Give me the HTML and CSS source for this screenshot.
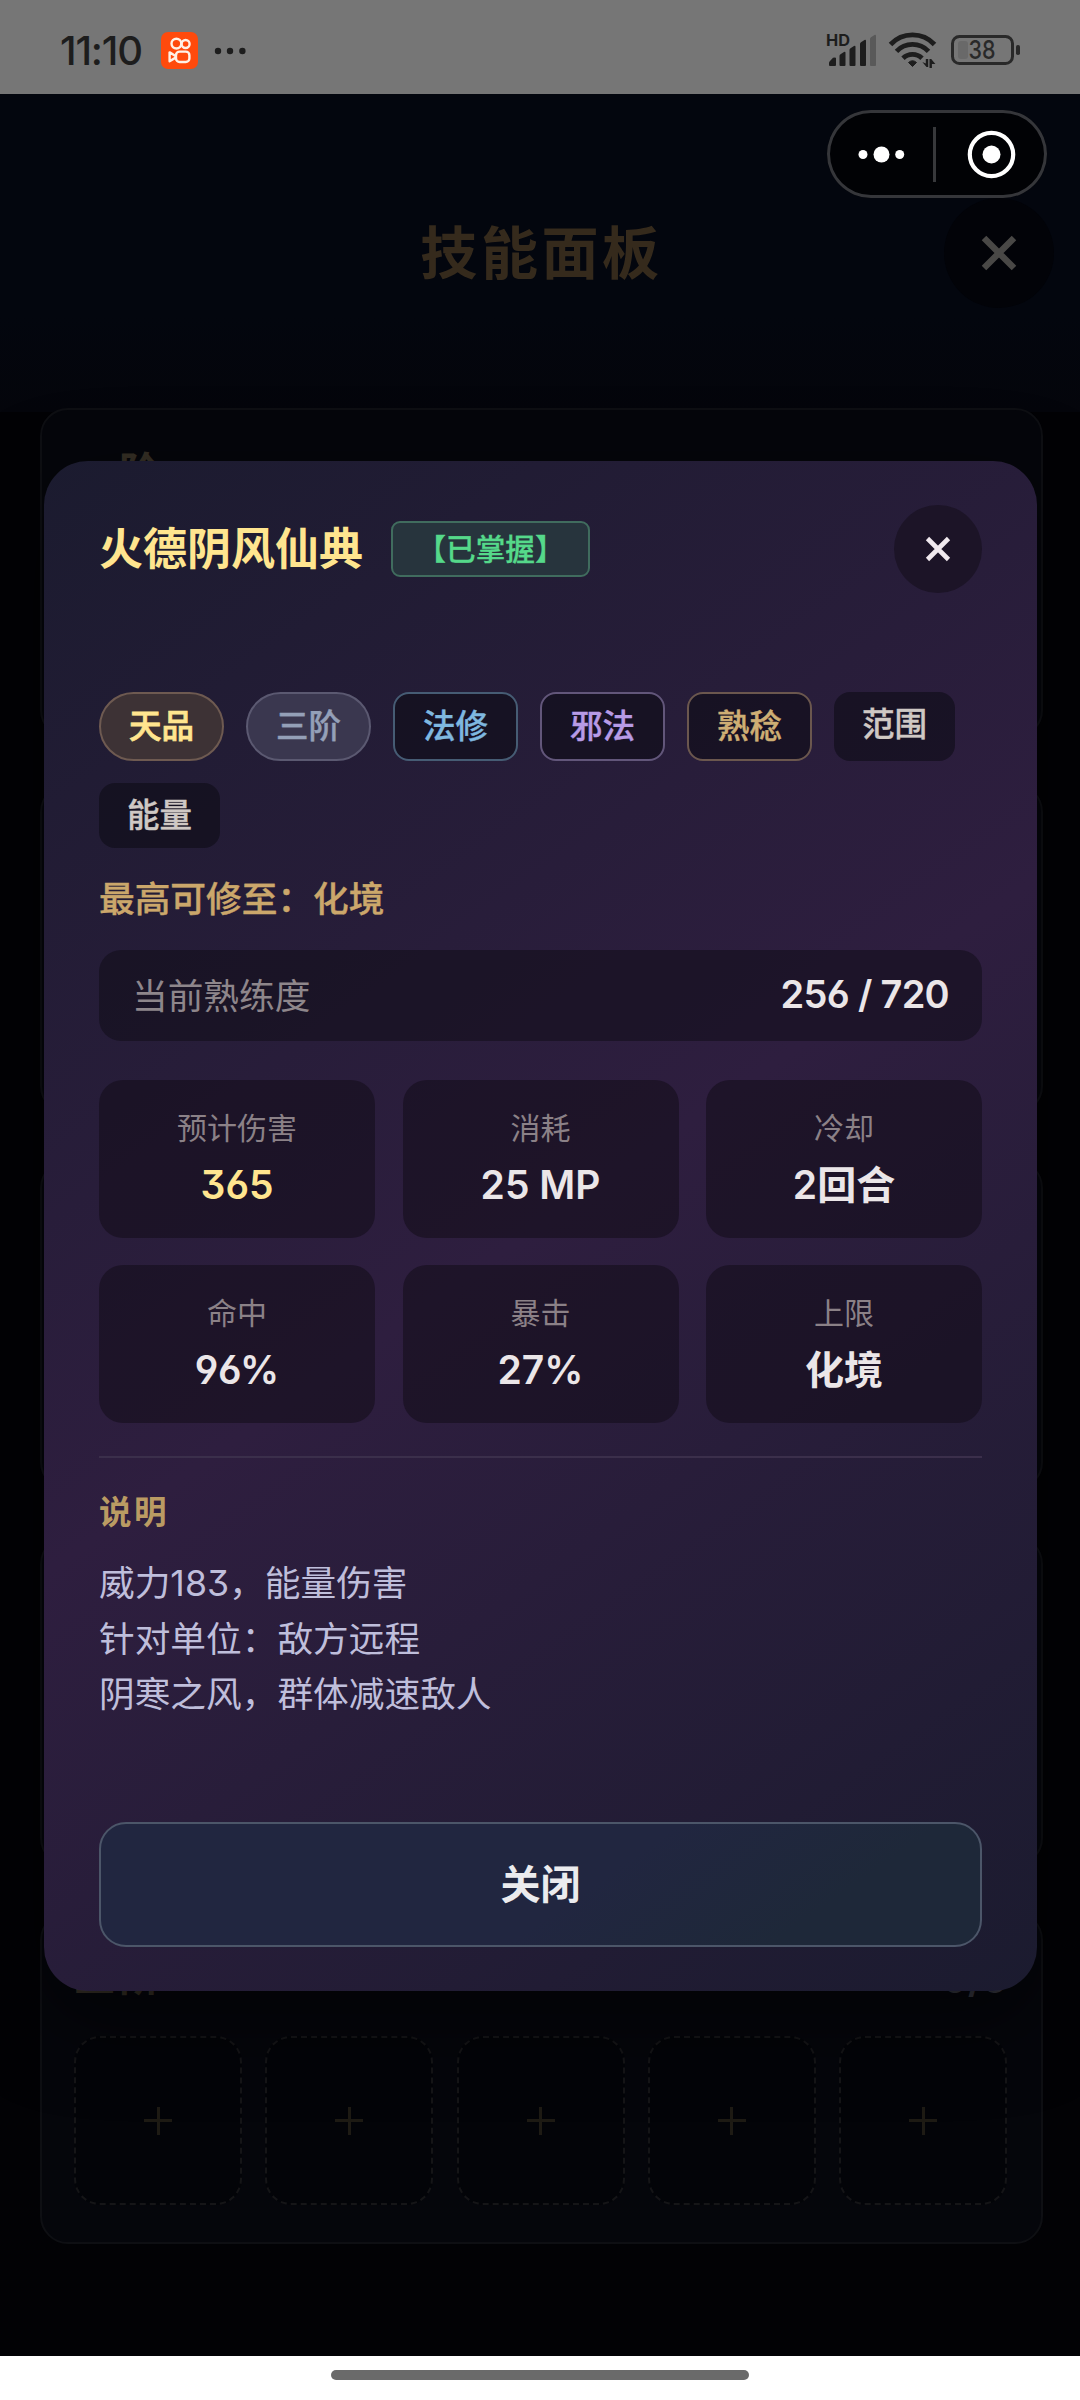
FILE: index.html
```html
<!DOCTYPE html>
<html lang="zh-CN">
<head>
<meta charset="utf-8">
<title>技能面板</title>
<link rel="stylesheet" href="styles.css">
</head>
<body>
<div class="screen">
  <header class="status">
    <div class="status-left">
      <span class="clock">11:10</span>
      <svg class="app-icon" width="37" height="37" viewBox="0 0 37 37">
        <rect width="37" height="37" rx="7" fill="#ff4a0c"/>
        <g fill="none" stroke="#fff1e6" stroke-width="2.4">
          <circle cx="15.4" cy="11.6" r="4.9"/>
          <circle cx="24.6" cy="12" r="4"/>
          <rect x="15" y="19.6" width="13.4" height="10.4" rx="3.6"/>
          <path d="M8.6 20.4v8.8l6-3.6v-1.6z" stroke-linejoin="round"/>
        </g>
      </svg>
      <svg class="more" width="32" height="8" viewBox="0 0 32 8" fill="#1d1d1d">
        <circle cx="4" cy="4" r="3.2"/><circle cx="16" cy="4" r="3.2"/><circle cx="28.4" cy="4" r="3.2"/>
      </svg>
    </div>
    <svg class="status-icons" width="195" height="40" viewBox="0 0 195 40">
      <text class="hd" x="1" y="16.5" textLength="24" lengthAdjust="spacingAndGlyphs">HD</text>
      <g fill="#1d1d1d">
        <path d="M4 36v-2q0-1 1-2l3-3.200q3-1 3 .5v6.700q0 1-1 1h-5q-1 0-1-1z"/>
        <path d="M14.500 27q0-1 1-1.700l3.500-2.300q1.500-.6 1.500 1v12q0 1-1 1h-4q-1 0-1-1z"/>
        <path d="M24.500 21q0-1 1-1.700l3.500-2.300q1.500-.6 1.500 1v18q0 1-1 1h-4q-1 0-1-1z"/>
        <path d="M35 15q0-1 1-1.700l3.500-2.300q1.500-.6 1.500 1v24q0 1-1 1h-4q-1 0-1-1z"/>
        <path d="M45 10q0-1 1-1.700l3.500-2.300q1.500-.6 1.500 1v29q0 1-1 1h-4q-1 0-1-1z" fill="#595959"/>
      </g>
      <g fill="none" stroke="#1d1d1d" stroke-width="4.800">
        <path d="M65.500 15.500a30 30 0 0 1 44 0"/>
        <path d="M71.500 22.300a22 22 0 0 1 32 0"/>
        <path d="M78 29.200a13.500 13.500 0 0 1 19 0"/>
      </g>
      <path d="M83.500 33.500q4-3.500 8 0l-4 4z" fill="#1d1d1d" stroke="#1d1d1d" stroke-linejoin="round"/>
      <path d="M97.300 33l4.200 5h1.700v-8h-2.400v4.500zM104.500 39v-9h1.700l4.200 5h-3.500v4z" fill="#1d1d1d"/>
      <rect x="133" y="12" width="10" height="18" rx="3" fill="#696969"/>
      <rect x="127.500" y="7.500" width="60" height="27" rx="7" fill="none" stroke="#292929" stroke-width="3"/>
      <rect x="191" y="16" width="4" height="10" rx="1.800" fill="#292929"/>
      <text class="battery" x="143.500" y="30" textLength="27" lengthAdjust="spacingAndGlyphs">38</text>
    </svg>
  </header>

  <main class="app">
    <div class="hero">
      <h1 class="page-title">技能面板</h1>
      <div class="page-close">
        <svg width="36" height="36" viewBox="0 0 36 36" stroke="#494846" stroke-width="6.400"><path d="M3 3l30 30M33 3L3 33"/></svg>
      </div>
    </div>
    <div class="tiers">
      <section class="tier"><div class="tier-head"><span>一阶</span></div></section>
      <section class="tier"></section>
      <section class="tier"></section>
      <section class="tier"></section>
      <section class="tier">
        <div class="tier-head"><span>五阶</span><span class="tier-count">0/5</span></div>
        <div class="slots">
          <div class="slot"></div><div class="slot"></div><div class="slot"></div><div class="slot"></div><div class="slot"></div>
        </div>
      </section>
    </div>

    <div class="overlay">
      <div class="modal">
        <div class="modal-head">
          <h2 class="skill-name">火德阴风仙典</h2>
          <span class="mastered">【已掌握】</span>
          <div class="modal-close">
            <svg width="26" height="26" viewBox="0 0 26 26" stroke="#f0e9ee" stroke-width="4.600"><path d="M2.500 2.500l21 21M23.500 2.500l-21 21"/></svg>
          </div>
        </div>
        <div class="tags">
          <span class="tag tag-grade">天品</span>
          <span class="tag tag-tier">三阶</span>
          <span class="tag tag-school">法修</span>
          <span class="tag tag-evil">邪法</span>
          <span class="tag tag-skill">熟稔</span>
          <span class="tag">范围</span>
          <span class="tag">能量</span>
        </div>
        <p class="cap">最高可修至：化境</p>
        <div class="progress"><span>当前熟练度</span><b class="num">256 / 720</b></div>
        <div class="stats">
          <div class="stat"><span>预计伤害</span><b class="gold">365</b></div>
          <div class="stat"><span>消耗</span><b>25 MP</b></div>
          <div class="stat"><span>冷却</span><b>2回合</b></div>
          <div class="stat"><span>命中</span><b>96%</b></div>
          <div class="stat"><span>暴击</span><b>27%</b></div>
          <div class="stat"><span>上限</span><b>化境</b></div>
        </div>
        <div class="notes">
          <h3>说明</h3>
          <p>威力183，能量伤害</p>
          <p>针对单位：敌方远程</p>
          <p>阴寒之风，群体减速敌人</p>
        </div>
        <button class="close-btn">关闭</button>
      </div>
    </div>

    <div class="capsule">
      <svg width="220" height="88" viewBox="0 0 220 88">
        <g fill="#fff">
          <circle cx="36" cy="44.500" r="4.500"/><circle cx="54.500" cy="44.500" r="8"/><circle cx="72.700" cy="44.500" r="4.500"/>
          <circle cx="164.500" cy="44.500" r="9"/>
        </g>
        <rect x="106" y="17" width="3" height="55" fill="#37383b"/>
        <circle cx="164.500" cy="44.500" r="21.700" fill="none" stroke="#fff" stroke-width="4.200"/>
      </svg>
    </div>
  </main>

  <footer class="navbar"><span class="pill"></span></footer>
</div>
</body>
</html>
```
FILE: styles.css
```css
* { box-sizing: border-box; }

body {
  margin: 0;
  font-family: Inter, "Noto Sans CJK SC", sans-serif;
  font-feature-settings: "cv03", "cv04", "cv09";
}

h1, h2, h3, p { margin: 0; }

.screen {
  width: 1080px;
  height: 2400px;
  display: flex;
  flex-direction: column;
  overflow: hidden;
}

/* status bar */
.status {
  height: 94px;
  flex: none;
  background: #767676;
  display: flex;
  justify-content: space-between;
  padding: 0 60px 0 60px;
}
.status-left {
  display: flex;
  align-items: center;
  padding-top: 7px;
}
.clock {
  width: 101px;
  font-size: 40px;
  font-weight: 500;
  line-height: 40px;
  letter-spacing: -1.200px;
  color: #1d1d1d;
}
.more { margin-left: 16px; }
.status-icons { margin-top: 29px; }
.hd { font: 700 16px Inter, sans-serif; fill: #1d1d1d; }
.battery { font: 500 26px Inter, sans-serif; fill: #292929; }

/* page behind the dialog */
.app {
  position: relative;
  flex: 1;
  background: #020205;
}
.hero {
  height: 318px;
  padding: 104px 26px 0;
  display: grid;
  grid-template-columns: 110px 1fr 110px;
  align-items: start;
  background: linear-gradient(#03060e 70%, #04050b);
}
.page-title {
  grid-column: 2;
  padding: 1px 0 0 3px;
  text-align: center;
  font-size: 57px;
  line-height: 110px;
  letter-spacing: 3.600px;
  color: #352a1c;
}
.page-close {
  width: 110px;
  height: 110px;
  border-radius: 50%;
  background: #020308;
  display: flex;
  align-items: center;
  justify-content: center;
}
.tiers {
  margin-top: -4px;
  padding: 0 37px 0 40px;
  display: flex;
  flex-direction: column;
  gap: 46px;
}
.tier {
  height: 330px;
  border: 2px solid #0e0f13;
  border-radius: 28px;
  background: #05060b;
  padding: 36px 34px 0 32px;
}
.tier:last-child { height: 332px; }
.tier-head {
  display: flex;
  justify-content: space-between;
  height: 50px;
  line-height: 52px;
  font-size: 41px;
  font-weight: 700;
  letter-spacing: 4px;
  color: #352f25;
}
.tier-count {
  padding-top: 4px;
  font-size: 36px;
  letter-spacing: 1px;
  color: #33343c;
}
.slots {
  margin-top: 36px;
  display: grid;
  grid-template-columns: repeat(5, 168px);
  justify-content: space-between;
}
.slot {
  height: 169px;
  border: 2px dashed #151517;
  border-radius: 26px;
  background:
    linear-gradient(#1e1b14, #1e1b14) center / 28px 3px no-repeat,
    linear-gradient(#1e1b14, #1e1b14) center / 3px 28px no-repeat,
    #030408;
}

/* mini-program capsule */
.capsule {
  position: absolute;
  top: 16px;
  right: 33px;
  width: 220px;
  height: 88px;
  border-radius: 44px;
  background: #010205;
  box-shadow: inset 0 0 0 3px #35363a;
}
.capsule svg { display: block; }

/* dialog */
.overlay {
  position: absolute;
  inset: 0;
  display: flex;
  align-items: center;
  padding: 2px 43px 0 44px;
}
.modal {
  width: 100%;
  height: 1530px;
  border-radius: 44px;
  padding: 44px 55px;
  background: linear-gradient(145deg, #1b1b2f 0%, #2e1e3f 50%, #1b1b2f 100%);
  box-shadow: 0 28px 86px rgba(0, 0, 0, 0.5);
  display: flex;
  flex-direction: column;
}
.modal-head {
  display: flex;
  align-items: center;
  height: 88px;
}
.skill-name {
  font-size: 44px;
  line-height: 60px;
  color: #ffe58f;
}
.mastered {
  margin-left: 28px;
  width: 199px;
  height: 56px;
  border: 2px solid #406c5e;
  border-radius: 9px;
  background: #27343d;
  color: #55d98a;
  font-size: 29.600px;
  font-weight: 500;
  line-height: 53px;
  text-align: center;
  -webkit-text-stroke: 0.3px;
}
.modal-close {
  margin-left: auto;
  width: 88px;
  height: 88px;
  border-radius: 50%;
  background: #1c1427;
  display: flex;
  align-items: center;
  justify-content: center;
}
.tags {
  margin-top: 99px;
  display: flex;
  flex-wrap: wrap;
  gap: 22px;
}
.tag {
  padding: 0 28px;
  border-radius: 16px;
  background: rgba(14, 11, 22, 0.6);
  color: #cfc8c4;
  font-size: 32.500px;
  font-weight: 500;
  line-height: 65px;
  -webkit-text-stroke: 0.4px;
}
.tag-grade, .tag-tier, .tag-school, .tag-evil, .tag-skill { border: 2px solid; }
.tag-grade {
  border-color: #6e5a51;
  border-radius: 35px;
  background: #3d3235;
  color: #ffe58f;
  -webkit-text-stroke: 0.8px;
}
.tag-tier {
  border-color: #5b5971;
  border-radius: 35px;
  background: #3a374f;
  color: #94a0b8;
}
.tag-school { border-color: #465c74; color: #7fb8e0; }
.tag-evil { border-color: #62567a; color: #b79be6; }
.tag-skill { border-color: #6b574e; color: #ceae74; }
.cap {
  margin-top: 26px;
  font-size: 35.700px;
  font-weight: 500;
  line-height: 50px;
  color: #cba76b;
  -webkit-text-stroke: 0.4px;
}
.progress {
  margin-top: 26px;
  height: 91px;
  border-radius: 22px;
  background: rgba(16, 12, 24, 0.55);
  padding: 0 33px 3px;
  display: flex;
  align-items: center;
  justify-content: space-between;
  font-size: 35.700px;
  color: #8e868b;
}
.progress span { margin-top: -2px; }
.num {
  font-size: 38px;
  font-weight: 600;
  letter-spacing: -0.700px;
  color: #ebe6e8;
}
.stats {
  margin-top: 39px;
  display: grid;
  grid-template-columns: repeat(3, 1fr);
  gap: 27px 27.500px;
}
.stat {
  height: 158px;
  border-radius: 24px;
  background: rgba(20, 14, 26, 0.6);
  padding-top: 26px;
  display: flex;
  flex-direction: column;
  align-items: center;
  color: #8b8187;
  font-size: 30px;
  line-height: 44px;
}
.stat b {
  margin-top: 9px;
  font-size: 39px;
  font-weight: 600;
  line-height: 52px;
  color: #ebe6e8;
}
.stat .gold { color: #ffe58f; }
.notes {
  margin-top: 33px;
  border-top: 2px solid #3b2f4b;
  padding-top: 32px;
  font-size: 35.700px;
  line-height: 55.500px;
  color: #bfbedb;
}
.notes h3 {
  margin-bottom: 20px;
  font-size: 32.500px;
  line-height: 46px;
  letter-spacing: 2.500px;
  color: #ba9b63;
}
.close-btn {
  margin-top: auto;
  height: 125px;
  border: 2px solid #4c5669;
  border-radius: 27px;
  background: linear-gradient(145deg, #212640 55%, #1e2839 80%);
  color: #ebebee;
  font: 600 40px/121px Inter, "Noto Sans CJK SC", sans-serif;
  padding: 0;
}

/* gesture bar */
.navbar {
  height: 44px;
  flex: none;
  background: #fff;
  display: flex;
  justify-content: center;
  padding-top: 14px;
}
.pill {
  width: 418px;
  height: 10px;
  border-radius: 5px;
  background: #6a6a6a;
}
```
